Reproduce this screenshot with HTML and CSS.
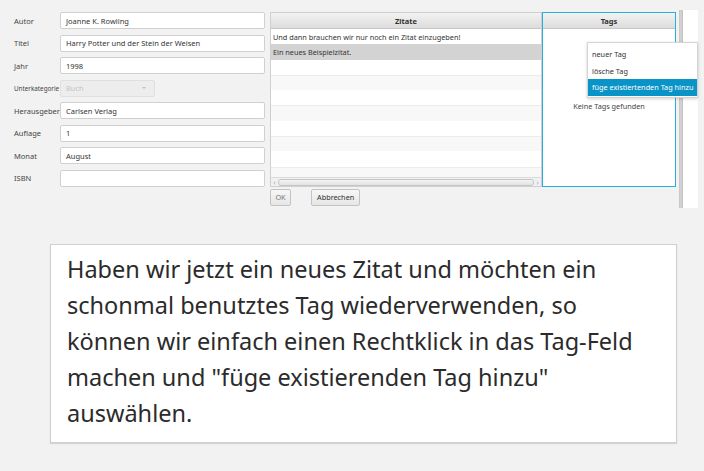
FILE: index.html
```html
<!DOCTYPE html>
<html>
<head>
<meta charset="utf-8">
<link rel="stylesheet" href="styles.css">
</head>
<body>
<div class="app">
  <div class="form">
    <label class="lbl">Autor</label><div class="field">Joanne K. Rowling</div>
    <label class="lbl">Titel</label><div class="field">Harry Potter und der Stein der Weisen</div>
    <label class="lbl">Jahr</label><div class="field">1998</div>
    <label class="lbl small">Unterkategorie</label><div class="combo"><span>Buch</span><span class="caret"></span></div>
    <label class="lbl">Herausgeber</label><div class="field">Carlsen Verlag</div>
    <label class="lbl">Auflage</label><div class="field">1</div>
    <label class="lbl">Monat</label><div class="field">August</div>
    <label class="lbl">ISBN</label><div class="field"></div>
  </div>
  <div class="center">
    <div class="table">
      <div class="thead">Zitate</div>
      <div class="rows">
        <div class="row">Und dann brauchen wir nur noch ein Zitat einzugeben!</div>
        <div class="row sel">Ein neues Beispielzitat.</div>
        <div class="row"></div>
        <div class="row alt"></div>
        <div class="row"></div>
        <div class="row alt"></div>
        <div class="row"></div>
        <div class="row alt"></div>
        <div class="row"></div>
        <div class="row alt last"></div>
      </div>
      <div class="hscroll"><span class="arr">&#8249;</span><span class="thumb"></span><span class="arr">&#8250;</span></div>
    </div>
    <div class="buttons">
      <div class="btn ok">OK</div>
      <div class="btn">Abbrechen</div>
    </div>
  </div>
  <div class="tags">
    <div class="thead">Tags</div>
    <div class="empty">Keine Tags gefunden</div>
  </div>
  <div class="vbar"></div>
  <div class="strip"></div>
  <div class="menu">
    <div class="item">neuer Tag</div>
    <div class="item">lösche Tag</div>
    <div class="item hi">füge existiertenden Tag hinzu</div>
  </div>
</div>
<div class="note">Haben wir jetzt ein neues Zitat und möchten ein<br>schonmal benutztes Tag wiederverwenden, so<br>können wir einfach einen Rechtklick in das Tag-Feld<br>machen und "füge existierenden Tag hinzu"<br>auswählen.</div>
</body>
</html>
```
FILE: styles.css
```css
html, body { margin: 0; padding: 0; }
body {
  background: #f2f2f2;
  font-family: "Noto Sans", "Open Sans", sans-serif;
  color: #333;
  width: 704px;
  height: 471px;
  overflow: hidden;
}
.app {
  position: relative;
  display: flex;
  align-items: flex-start;
  height: 210px;
}
.form {
  display: grid;
  grid-template-columns: 46px 205px;
  grid-auto-rows: 17px;
  row-gap: 5.5px;
  padding: 12px 0 0 14px;
  font-size: 7.5px;
}
.lbl {
  display: flex;
  align-items: center;
  color: #444;
  white-space: nowrap;
}
.lbl.small { font-size: 6.3px; }
.field {
  box-sizing: border-box;
  background: #fff;
  border: 1px solid #d0d0d0;
  border-radius: 2px;
  padding: 0 5px;
  display: flex;
  align-items: center;
  color: #333;
}
.combo {
  box-sizing: border-box;
  width: 95px;
  background: #ededed;
  border: 1px solid #e0e0e0;
  border-radius: 2px;
  padding: 0 5px;
  display: flex;
  align-items: center;
  justify-content: space-between;
  color: #c4c4c4;
}
.caret {
  width: 0; height: 0;
  border-left: 2.5px solid transparent;
  border-right: 2.5px solid transparent;
  border-top: 2.5px solid #c4c4c4;
  margin-right: 3px;
}
.center {
  margin-left: 5px;
  padding-top: 12px;
  width: 272px;
}
.table {
  box-sizing: border-box;
  height: 175px;
  border: 1px solid #cfcfcf;
  background: #fff;
  display: flex;
  flex-direction: column;
}
.thead {
  height: 16px;
  box-sizing: border-box;
  background: linear-gradient(#f3f3f3, #dcdcdc);
  border-bottom: 1px solid #c8c8c8;
  font-size: 7.5px;
  font-weight: bold;
  color: #333;
  display: flex;
  align-items: center;
  justify-content: center;
}
.rows { flex: 1; overflow: hidden; }
.row {
  box-sizing: border-box;
  height: 15.3px;
  font-size: 7.3px;
  padding-left: 2px;
  display: flex;
  align-items: center;
  color: #333;
  background: #fff;
}
.row.alt { background: #f8f8f8; border-top: 1px solid #ececec; }
.row.sel { background: #d3d3d3; }
.hscroll {
  height: 8px;
  display: flex;
  align-items: center;
  background: #f0f0f0;
  border-top: 1px solid #dcdcdc;
  font-size: 7px;
  color: #aaa;
  padding: 0 1px;
}
.arr { width: 5px; text-align: center; line-height: 7px; }
.thumb {
  flex: 1;
  height: 5px;
  border: 1px solid #c6c6c6;
  border-radius: 3px;
  background: linear-gradient(#f4f4f4, #e2e2e2);
  margin: 0 1px;
}
.buttons {
  display: flex;
  gap: 20px;
  margin-top: 2px;
}
.btn {
  box-sizing: border-box;
  height: 16.5px;
  padding: 0 5px;
  border: 1px solid #c3c3c3;
  border-radius: 2px;
  background: linear-gradient(#f7f7f7, #e6e6e6);
  font-size: 7.3px;
  color: #333;
  display: flex;
  align-items: center;
}
.btn.ok { width: 21px; justify-content: center; padding: 0; color: #777; }
.tags {
  box-sizing: border-box;
  margin-top: 12px;
  width: 134px;
  height: 175px;
  border: 1.5px solid #2aaee0;
  background: #fff;
}
.tags .thead { height: 16px; }
.empty {
  text-align: center;
  font-size: 7.3px;
  color: #444;
  margin-top: 72px;
}
.vbar {
  margin-left: 3px;
  margin-top: 10px;
  width: 4px;
  height: 198px;
  background: linear-gradient(90deg, #c4c4c4, #d6d6d6, #bdbdbd);
}
.strip {
  margin-top: 10px;
  width: 15px;
  height: 198px;
  background: #fff;
}
.menu {
  position: absolute;
  left: 587px;
  top: 42px;
  width: 111px;
  box-sizing: border-box;
  background: #fff;
  border: 1px solid #d4d4d4;
  box-shadow: 0 1px 3px rgba(0,0,0,0.18);
  padding: 3px 0 1px;
  font-size: 7.3px;
}
.item {
  height: 16.5px;
  display: flex;
  align-items: center;
  padding-left: 4px;
  color: #333;
  white-space: nowrap;
}
.item.hi { background: #0a93c6; color: #fff; }
.note {
  box-sizing: border-box;
  margin: 34px 0 0 50px;
  width: 627px;
  height: 199px;
  background: #fff;
  border: 1px solid #d0d0d0;
  box-shadow: 0 1px 1px rgba(0,0,0,0.12);
  padding: 6px 0 0 16px;
  font-size: 23.5px;
  line-height: 36px;
  color: #2b2b2b;
  white-space: nowrap;
}
```
